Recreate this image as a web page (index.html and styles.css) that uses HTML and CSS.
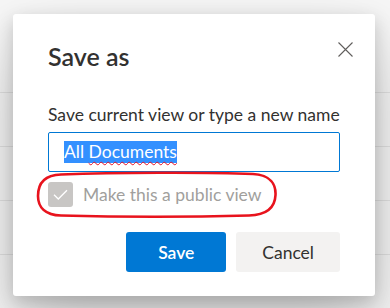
FILE: index.html
```html
<!DOCTYPE html>
<html lang="en">
<head>
    <meta charset="UTF-8">
    <meta name="viewport" content="width=device-width, initial-scale=1.0">
    <title>Save as</title>
    <link rel="stylesheet" href="styles.css">
</head>
<body>
    <div class="list">
        <div class="row"></div>
        <div class="row"></div>
        <div class="row"></div>
        <div class="row"></div>
    </div>

    <div class="dialog">
        <div class="dialog-header">
            <h2 class="dialog-title">Save as</h2>
            <button class="close-btn" aria-label="Close">
                <svg width="15" height="15" viewBox="0 0 15 15">
                    <path d="M0.5 0.5 L14.5 14.5 M14.5 0.5 L0.5 14.5" stroke="#605e5c" stroke-width="1.1" fill="none"/>
                </svg>
            </button>
        </div>

        <div class="dialog-body">
            <label class="field-label">Save current view or type a new name</label>
            <div class="text-field">
                <span class="selected">All <span class="misspelled">Documents</span></span>
            </div>

            <div class="check-row">
                <span class="check-box">
                    <svg width="25" height="25" viewBox="0 0 25 25">
                        <path d="M6 12.8 L10.3 17 L19 8.2" stroke="#fff" stroke-width="1.3" fill="none"/>
                    </svg>
                </span>
                <span class="check-label">Make this a public view</span>
            </div>

            <div class="actions">
                <button class="btn primary">Save</button>
                <button class="btn">Cancel</button>
            </div>
        </div>

        <!-- red annotation ring drawn over the checkbox -->
        <svg class="annotation" width="244" height="48" viewBox="0 0 244 48">
            <path d="M26 3.5 C80 1.5 170 1 218 3 C236 4 241 14 240.5 24 C240 36 232 44 214 44.5 C160 46 80 46 26 44.5 C10 44 3 36 3 25 C3 12 10 4 26 3.5 Z" stroke="#e8131d" stroke-width="2.6" fill="none"/>
        </svg>
    </div>
</body>
</html>
```

FILE: styles.css
```css
body {
    margin: 0;
    background-color: #f7f7f7;
    font-family: Lato, "Open Sans", Arial, sans-serif;
    color: #323130;
    overflow: hidden;
}
.list {
    padding-top: 39px;
}
.row {
    height: 54px;
    box-sizing: border-box;
    border-bottom: 1px solid #e3e3e3;
}
.dialog {
    position: absolute;
    top: 14px;
    left: 13px;
    width: 362px;
    height: 282px;
    box-sizing: border-box;
    background: white;
    border-radius: 3px;
    box-shadow: 0 32px 72px rgba(0,0,0,0.22), 0 6px 18px rgba(0,0,0,0.18);
}
.dialog-header {
    display: flex;
    justify-content: space-between;
    align-items: flex-start;
    padding: 26px 22px 0 35px;
}
.dialog-title {
    margin: 0;
    font-size: 25px;
    font-weight: 600;
    line-height: 32px;
    color: #323130;
}
.close-btn {
    margin-top: 2px;
    padding: 0;
    border: none;
    background: none;
    width: 15px;
    height: 15px;
    display: flex;
}
.dialog-body {
    padding: 30px 35px 0 35px;
}
.field-label {
    display: block;
    font-size: 17.5px;
    line-height: 25px;
    white-space: nowrap;
    color: #323130;
}
.text-field {
    margin-top: 5px;
    height: 40px;
    box-sizing: border-box;
    border: 1px solid #0078d4;
    border-radius: 2px;
    padding: 0 15px;
    display: flex;
    align-items: center;
    font-size: 17.5px;
}
.selected {
    background-color: #3390ff;
    color: white;
    line-height: 22px;
}
.misspelled {
    text-decoration: underline wavy #e81123;
    text-decoration-thickness: 1px;
    text-underline-offset: 3px;
}
.check-row {
    display: flex;
    align-items: center;
    gap: 10px;
    margin-top: 10px;
    height: 25px;
}
.check-box {
    width: 25px;
    height: 25px;
    background-color: #c8c6c4;
    border-radius: 3px;
    display: flex;
}
.check-label {
    font-size: 17.5px;
    color: #a19f9d;
}
.actions {
    display: flex;
    justify-content: flex-end;
    gap: 10px;
    margin-top: 25px;
}
.btn {
    height: 40px;
    min-width: 100px;
    padding: 0 26px;
    border: none;
    border-radius: 3px;
    background-color: #f3f2f1;
    color: #323130;
    font-family: inherit;
    font-size: 17.5px;
}
.btn.primary {
    background-color: #0078d4;
    color: white;
    font-weight: 600;
}
.annotation {
    position: absolute;
    left: 22px;
    top: 157px;
}
```
